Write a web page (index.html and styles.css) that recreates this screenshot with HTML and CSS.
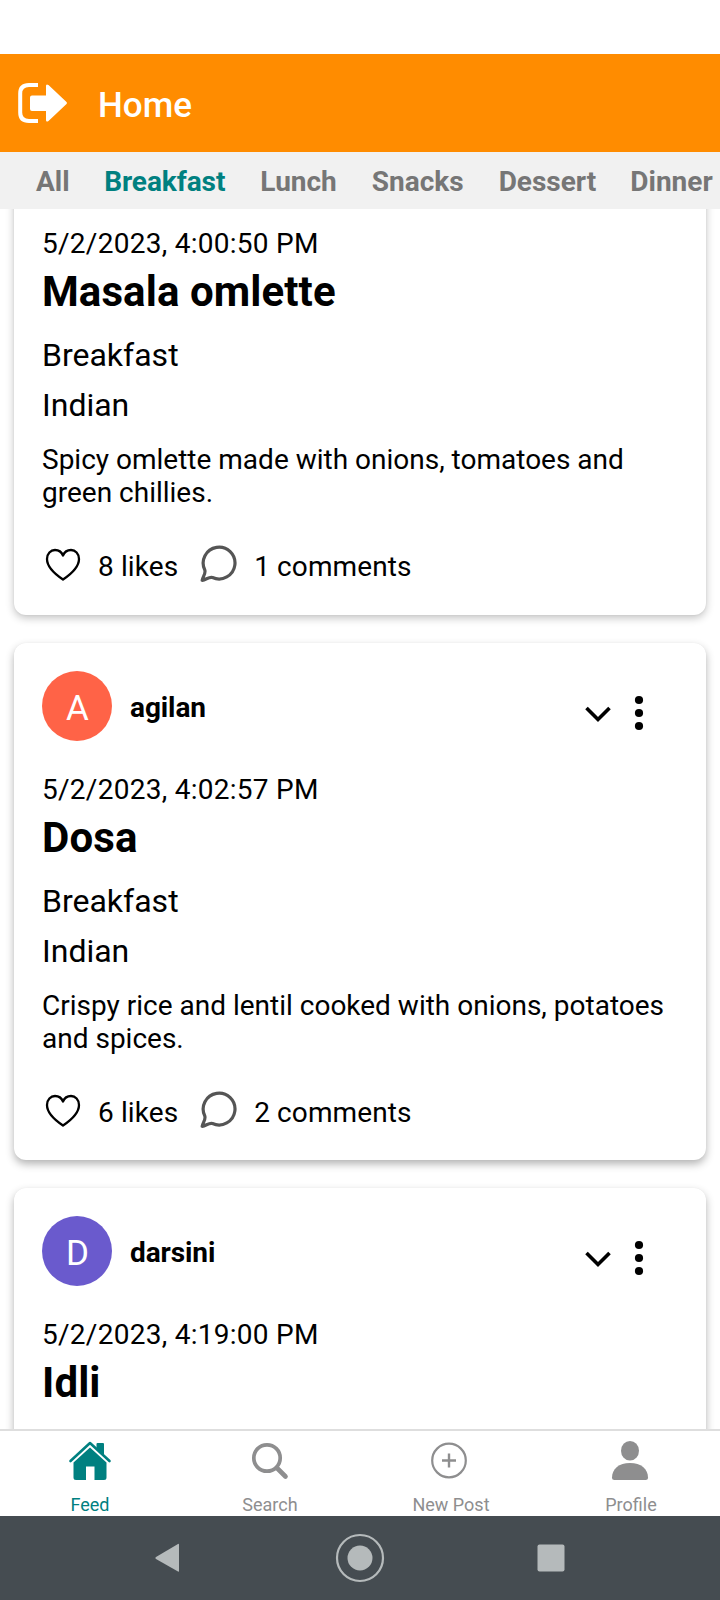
FILE: index.html
```html
<!DOCTYPE html>
<html lang="en">
<head>
<meta charset="utf-8">
<title>Home</title>
<link rel="stylesheet" href="styles.css">
</head>
<body>
<div class="screen">
  <header class="header">
    <svg class="exit" width="50" height="42" viewBox="0 0 50 42"><path d="M20 3H11Q2.200 3 2.200 11.500V30.500Q2.200 39 11 39H20" fill="none" stroke="#fff" stroke-width="4"/><path d="M14 13.500H28V4Q28 1.500 30.500 3L48.500 20Q49.500 21 48.500 22L30.500 39Q28 40.500 28 38V29H14Q12 29 12 27V15.500Q12 13.500 14 13.500Z" fill="#fff"/></svg>
    <h1 class="title">Home</h1>
  </header>
  <nav class="tabs">
    <span class="tab">All</span>
    <span class="tab tab-active">Breakfast</span>
    <span class="tab">Lunch</span>
    <span class="tab">Snacks</span>
    <span class="tab">Dessert</span>
    <span class="tab">Dinner</span>
  </nav>
  <main class="feed">
    <article class="card card-scrolled">
      <div class="date">5/2/2023, 4:00:50 PM</div>
      <h2 class="name">Masala omlette</h2>
      <div class="meta">Breakfast</div>
      <div class="meta">Indian</div>
      <p class="desc">Spicy omlette made with onions, tomatoes and green chillies.</p>
      <div class="actions">
        <svg class="heart" width="36" height="34" viewBox="0 0 36 34"><path d="M18 31.500C12 27.500 2 20.500 2 11C2 5.500 5.700 2 10 2C13.800 2 16.600 4 18 7.500C19.400 4 22.200 2 26 2C30.300 2 34 5.500 34 11C34 20.500 24 27.500 18 31.500Z" fill="none" stroke="#000" stroke-width="2.300" stroke-linejoin="round"/></svg>
        <span class="likes">8 likes</span>
        <svg class="bubble" width="38" height="38" viewBox="0 0 38 38"><path d="M4.800 25C6 28.500 3 31 2.200 35.300C6 34.800 9 31.500 12.500 32.500A15.900 15.900 0 1 0 4.800 25Z" fill="none" stroke="#555" stroke-width="3.200" stroke-linejoin="round"/></svg>
        <span>1 comments</span>
      </div>
    </article>
    <article class="card card-low">
      <div class="author">
        <span class="avatar avatar-tomato">A</span>
        <span class="user">agilan</span>
        <svg class="chevron" width="28" height="20" viewBox="0 0 28 20"><path d="M2.500 3L14 14.500L25.500 3" fill="none" stroke="#000" stroke-width="3.600"/></svg>
        <svg class="dots" width="10" height="36" viewBox="0 0 10 36"><circle cx="5" cy="5" r="4.100"/><circle cx="5" cy="18" r="4.100"/><circle cx="5" cy="31" r="4.100"/></svg>
      </div>
      <div class="date">5/2/2023, 4:02:57 PM</div>
      <h2 class="name">Dosa</h2>
      <div class="meta">Breakfast</div>
      <div class="meta">Indian</div>
      <p class="desc">Crispy rice and lentil cooked with onions, potatoes and spices.</p>
      <div class="actions">
        <svg class="heart" width="36" height="34" viewBox="0 0 36 34"><path d="M18 31.500C12 27.500 2 20.500 2 11C2 5.500 5.700 2 10 2C13.800 2 16.600 4 18 7.500C19.400 4 22.200 2 26 2C30.300 2 34 5.500 34 11C34 20.500 24 27.500 18 31.500Z" fill="none" stroke="#000" stroke-width="2.300" stroke-linejoin="round"/></svg>
        <span class="likes">6 likes</span>
        <svg class="bubble" width="38" height="38" viewBox="0 0 38 38"><path d="M4.800 25C6 28.500 3 31 2.200 35.300C6 34.800 9 31.500 12.500 32.500A15.900 15.900 0 1 0 4.800 25Z" fill="none" stroke="#555" stroke-width="3.200" stroke-linejoin="round"/></svg>
        <span>2 comments</span>
      </div>
    </article>
    <article class="card card-low">
      <div class="author">
        <span class="avatar avatar-slate">D</span>
        <span class="user">darsini</span>
        <svg class="chevron" width="28" height="20" viewBox="0 0 28 20"><path d="M2.500 3L14 14.500L25.500 3" fill="none" stroke="#000" stroke-width="3.600"/></svg>
        <svg class="dots" width="10" height="36" viewBox="0 0 10 36"><circle cx="5" cy="5" r="4.100"/><circle cx="5" cy="18" r="4.100"/><circle cx="5" cy="31" r="4.100"/></svg>
      </div>
      <div class="date">5/2/2023, 4:19:00 PM</div>
      <h2 class="name">Idli</h2>
    </article>
  </main>
  <nav class="bottom">
    <a class="item item-active">
      <svg width="44" height="40" viewBox="0 0 44 40"><path d="M2.500 20L22 2L41.500 20" fill="none" stroke="#008080" stroke-width="2.600" stroke-linecap="round" stroke-linejoin="round"/><path d="M28.500 8V3Q28.500 2 29.500 2H35Q36 2 36 3V15Z" fill="#008080"/><path d="M22 6.500L38.500 21.500V36.500Q38.500 39 36 39H26.500V25.500H18V39H8Q5.500 39 5.500 36.500V21.500Z" fill="#008080"/></svg>
      <span>Feed</span>
    </a>
    <a class="item">
      <svg width="40" height="40" viewBox="0 0 40 40"><circle cx="17" cy="17" r="13.200" fill="none" stroke="#8e8e8f" stroke-width="3.700"/><path d="M27 27L35.500 35.500" stroke="#8e8e8f" stroke-width="4.600" stroke-linecap="round"/></svg>
      <span>Search</span>
    </a>
    <a class="item item-new">
      <svg width="40" height="40" viewBox="0 0 40 40"><circle cx="20" cy="19.500" r="16.800" fill="none" stroke="#8e8e8f" stroke-width="2.200"/><path d="M13 19.500H27M20 12.500V26.500" stroke="#8e8e8f" stroke-width="2.400"/></svg>
      <span>New Post</span>
    </a>
    <a class="item item-profile">
      <svg width="40" height="40" viewBox="0 0 40 40" fill="#8e8e8f"><ellipse cx="20" cy="9.800" rx="9" ry="9.800"/><path d="M2 36.500C2 28 9 22 20 22S38 28 38 36.500Q38 39 35.500 39H4.500Q2 39 2 36.500Z"/></svg>
      <span>Profile</span>
    </a>
  </nav>
  <footer class="system">
    <svg width="26" height="32" viewBox="0 0 26 32"><path d="M2 15L24 2Q25 1.500 25 2.500V29Q25 30 24 29.500L2 17Q.500 16 2 15Z" fill="#b5babb"/></svg>
    <svg width="50" height="50" viewBox="0 0 50 50"><circle cx="25" cy="25" r="23" fill="none" stroke="#b5babb" stroke-width="2.200"/><circle cx="25" cy="25" r="12.500" fill="#b5babb"/></svg>
    <svg width="28" height="28" viewBox="0 0 28 28"><rect x=".500" y=".500" width="27" height="27" rx="2" fill="#b5babb"/></svg>
  </footer>
</div>
</body>
</html>
```

FILE: styles.css
```css
* { box-sizing: border-box; }
body { margin: 0; background: #fff; color: #000; font: 28px/33px Roboto, sans-serif; }
h1, h2, p { margin: 0; }
svg { display: block; flex: none; }

.screen { width: 720px; height: 1600px; padding-top: 54px; display: flex; flex-direction: column; overflow: hidden; }

.header { flex: none; height: 98px; padding-left: 18px; display: flex; align-items: center; gap: 30px; background: #ff8c00; }
.title { padding-top: 6px; font-size: 35px; font-weight: 500; line-height: 42px; color: #fff; }

.tabs { flex: none; height: 57px; padding: 1px 0 0 36px; display: flex; align-items: center; gap: 35px; background: #f1f1f1; white-space: nowrap; overflow: hidden; }
.tab { font-weight: 700; color: #767676; }
.tab-active { margin-left: -.5px; letter-spacing: -.07px; color: #008080; }
.tab:last-child { margin-left: -1px; }

.feed { flex: 1; min-height: 0; padding: 0 14px; display: flex; flex-direction: column; gap: 28px; overflow: hidden; background: #fff; }
.card { flex: none; padding: 28px 28px 30px; border-radius: 12px; background: #fff; box-shadow: 0 3px 8px rgba(0, 0, 0, .24), 0 0 2px rgba(0, 0, 0, .08); }
.card-scrolled { margin-top: -20px; padding-top: 38px; padding-bottom: 31px; border-radius: 0 0 12px 12px; }
.card-low { box-shadow: 0 4px 9px rgba(0, 0, 0, .3), 0 0 1px rgba(0, 0, 0, .06); }

.author { height: 70px; margin-bottom: 32px; padding-right: 34px; display: flex; align-items: center; }
.avatar { width: 70px; height: 70px; padding: 3px 0 0 1px; border-radius: 50%; font-size: 35px; line-height: 70px; text-align: center; color: #fff; }
.avatar-tomato { background: #ff6347; }
.avatar-slate { background: #6a5acd; }
.user { flex: 1; margin-left: 18px; padding-top: 3px; font-size: 28px; font-weight: 700; letter-spacing: -.1px; }
.chevron { margin: 17px 22px 0 0; }
.dots { margin-top: 14px; }

.date { letter-spacing: .27px; }
.name { margin: 7px 0 20px; font-size: 42px; line-height: 49px; font-weight: 700; letter-spacing: .1px; }
.meta { margin-bottom: 12px; font-size: 32px; line-height: 38px; }
.desc { margin: 19px 0 35px; }
.actions { height: 40px; display: flex; align-items: center; letter-spacing: .1px; }
.actions span { padding-top: 4px; }
.heart { margin: 1px 17px 0 3px; }
.likes { margin-right: 22px; }
.bubble { margin: 0 16px 0 0; }

.bottom { flex: none; height: 87px; padding-top: 10px; border-top: 2px solid #dedede; display: grid; grid-template-columns: repeat(4, 1fr); background: #fff; }
.item { display: flex; flex-direction: column; align-items: center; gap: 13px; font-size: 18px; line-height: 22px; color: #8e8e8f; }
.item-active { color: #008080; }
.item-new svg { margin-right: 3px; }
.item-new span, .item-profile span { padding-left: 2px; }

.system { flex: none; height: 84px; padding: 0 155px 0 154px; display: grid; grid-template-columns: 181px 202px 28px; align-items: center; background: #454c51; }
```
